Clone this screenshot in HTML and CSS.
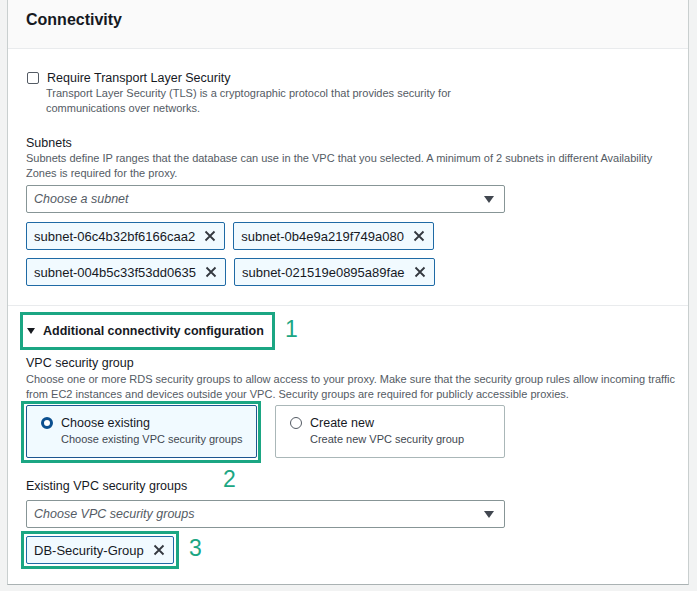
FILE: index.html
```html
<!DOCTYPE html>
<html lang="en">
<head>
<meta charset="utf-8">
<title>Connectivity</title>
<link rel="stylesheet" href="styles.css">
</head>
<body>
<div class="card">
  <div class="card-header"><h2 class="title">Connectivity</h2></div>

  <div class="section">
    <div class="checkbox-field">
      <div class="checkbox-row">
        <span class="checkbox"></span>
        <span class="label">Require Transport Layer Security</span>
      </div>
      <p class="desc indent">Transport Layer Security (TLS) is a cryptographic protocol that provides security for<br>communications over networks.</p>
    </div>

    <div class="field">
      <div class="label">Subnets</div>
      <p class="desc">Subnets define IP ranges that the database can use in the VPC that you selected. A minimum of 2 subnets in different Availability<br>Zones is required for the proxy.</p>
      <div class="select">
        <span class="placeholder">Choose a subnet</span>
        <svg class="caret" width="10" height="7" viewBox="0 0 10 7"><polygon points="0,0 10,0 5,7" fill="#414750"/></svg>
      </div>
      <div class="tokens">
        <span class="token">subnet-06c4b32bf6166caa2<svg class="x" width="12" height="12" viewBox="0 0 12 12"><path d="M1.5 1.5 L10.5 10.5 M10.5 1.5 L1.5 10.5" stroke="#33383f" stroke-width="1.8" fill="none"/></svg></span>
        <span class="token">subnet-0b4e9a219f749a080<svg class="x" width="12" height="12" viewBox="0 0 12 12"><path d="M1.5 1.5 L10.5 10.5 M10.5 1.5 L1.5 10.5" stroke="#33383f" stroke-width="1.8" fill="none"/></svg></span>
        <span class="token">subnet-004b5c33f53dd0635<svg class="x" width="12" height="12" viewBox="0 0 12 12"><path d="M1.5 1.5 L10.5 10.5 M10.5 1.5 L1.5 10.5" stroke="#33383f" stroke-width="1.8" fill="none"/></svg></span>
        <span class="token">subnet-021519e0895a89fae<svg class="x" width="12" height="12" viewBox="0 0 12 12"><path d="M1.5 1.5 L10.5 10.5 M10.5 1.5 L1.5 10.5" stroke="#33383f" stroke-width="1.8" fill="none"/></svg></span>
      </div>
    </div>
  </div>

  <div class="section section-b">
    <div class="expander annot-1">
      <svg class="exp-caret" width="8" height="6" viewBox="0 0 8 6"><polygon points="0,0 8,0 4,6" fill="#16191f"/></svg>
      <span class="exp-label">Additional connectivity configuration</span>
      <span class="num num-1">1</span>
    </div>

    <div class="field field-vpc">
      <div class="label">VPC security group</div>
      <p class="desc">Choose one or more RDS security groups to allow access to your proxy. Make sure that the security group rules allow incoming traffic<br>from EC2 instances and devices outside your VPC. Security groups are required for publicly accessible proxies.</p>
      <div class="tiles">
        <div class="tile tile-selected annot-2">
          <span class="radio radio-on"></span>
          <div class="tile-text">
            <div class="tile-title">Choose existing</div>
            <div class="tile-sub">Choose existing VPC security groups</div>
          </div>
          <span class="num num-2">2</span>
        </div>
        <div class="tile">
          <span class="radio"></span>
          <div class="tile-text">
            <div class="tile-title">Create new</div>
            <div class="tile-sub">Create new VPC security group</div>
          </div>
        </div>
      </div>
    </div>

    <div class="field field-existing">
      <div class="label">Existing VPC security groups</div>
      <div class="select select-tight">
        <span class="placeholder">Choose VPC security groups</span>
        <svg class="caret" width="10" height="7" viewBox="0 0 10 7"><polygon points="0,0 10,0 5,7" fill="#414750"/></svg>
      </div>
      <div class="tokens">
        <span class="token annot-3">DB-Security-Group<svg class="x" width="12" height="12" viewBox="0 0 12 12"><path d="M1.5 1.5 L10.5 10.5 M10.5 1.5 L1.5 10.5" stroke="#33383f" stroke-width="1.8" fill="none"/></svg><span class="num num-3">3</span></span>
      </div>
    </div>
  </div>
</div>
</body>
</html>
```

FILE: styles.css
```css
* { box-sizing: border-box; }

html, body {
  margin: 0;
  overflow: hidden;
}

body {
  background: #f2f3f3;
  padding: 0 8px 8px 7px;
  font-family: "Liberation Sans", Arial, sans-serif;
  color: #16191f;
}

.card {
  background: #ffffff;
  border: 1px solid #c9cfcf;
  border-top: none;
  border-bottom-color: #aab2b3;
}

.card-header {
  background: #fafafa;
  padding: 10px 18px 18px;
  border-bottom: 1px solid #e9ebed;
}

.title {
  margin: 0;
  font-size: 16px;
  line-height: 20px;
  font-weight: 700;
  color: #16191f;
}

.section {
  padding: 20px 18px 19px;
}

.section-b {
  border-top: 1px solid #e9ebed;
  padding-top: 17px;
  padding-bottom: 20px;
}

.label {
  font-size: 12.5px;
  line-height: 16px;
  color: #16191f;
}

.desc {
  margin: 0;
  font-size: 11px;
  line-height: 14.5px;
  color: #545b64;
  white-space: nowrap;
}

.checkbox-row {
  display: flex;
  align-items: center;
  gap: 8px;
  padding-left: 1px;
  padding-top: 1px;
}

.checkbox {
  width: 12px;
  height: 12px;
  border: 1.5px solid #545b64;
  border-radius: 2px;
  background: #fff;
  flex: none;
}

.indent {
  margin-top: 0;
  padding-left: 20px;
}

.field {
  margin-top: 20px;
  width: 480px;
}

.field-vpc {
  margin-top: 16px;
}

.field-vpc .desc {
  margin-top: 1px;
}

.select {
  margin-top: 5px;
  height: 28px;
  border: 1px solid #879596;
  border-radius: 2px;
  display: flex;
  align-items: center;
  justify-content: space-between;
  padding: 0 10px 0 7px;
  width: 479px;
}

.select-tight {
  margin-top: 6px;
}

.placeholder {
  font-style: italic;
  font-size: 12.5px;
  color: #545b64;
}

.caret {
  display: block;
}

.tokens {
  margin-top: 9px;
  display: flex;
  flex-wrap: wrap;
  gap: 8px;
}

.field-existing .tokens {
  margin-top: 8px;
}

.token {
  display: inline-flex;
  align-items: center;
  gap: 9px;
  height: 28px;
  padding: 0 8px 0 7px;
  background: #f1faff;
  border: 1px solid #1f6aa5;
  border-radius: 2px;
  font-size: 13px;
  color: #16191f;
}

.x {
  display: block;
  flex: none;
}

.expander {
  display: flex;
  width: max-content;
  align-items: center;
  gap: 8px;
  padding-left: 1px;
  font-size: 12.5px;
  line-height: 16px;
  font-weight: 700;
  color: #16191f;
}

.exp-caret {
  display: block;
}

.tiles {
  margin-top: 4px;
  display: grid;
  grid-template-columns: 231px 230px;
  gap: 18px;
}

.tile {
  display: flex;
  align-items: flex-start;
  gap: 8px;
  height: 53px;
  padding: 9px 14px 10px;
  border: 1px solid #aab7b8;
  border-radius: 2px;
  background: #fff;
}

.tile-selected {
  background: #f1faff;
  border-color: #1d5690;
}

.radio {
  width: 12px;
  height: 12px;
  margin-top: 2px;
  border: 1.5px solid #545b64;
  border-radius: 50%;
  background: #fff;
  flex: none;
}

.radio-on {
  border: 3.5px solid #0b4f8f;
  background: #fff;
}

.tile-title {
  font-size: 12.5px;
  line-height: 16px;
  color: #16191f;
  white-space: nowrap;
}

.tile-sub {
  margin-top: 1px;
  font-size: 11px;
  line-height: 15px;
  color: #414750;
  white-space: nowrap;
}

/* annotation overlays */
.annot-1, .annot-2, .annot-3 {
  position: relative;
}

.annot-1::after, .annot-2::after, .annot-3::after {
  content: "";
  position: absolute;
  border: 3px solid #1ba683;
  pointer-events: none;
}

.annot-1::after {
  top: -11px;
  bottom: -11px;
  left: -6px;
  right: -11px;
}

.annot-2::after {
  top: -5px;
  bottom: -6px;
  left: -6px;
  right: -5px;
}

.annot-3::after {
  top: -6px;
  bottom: -6px;
  left: -6px;
  right: -6px;
}

.num {
  position: absolute;
  font-family: "Liberation Sans", Arial, sans-serif;
  font-size: 23px;
  line-height: 23px;
  font-weight: 400;
  color: #1ba683;
}

.num-1 {
  left: 259px;
  top: -5px;
}

.num-2 {
  left: 196px;
  top: 62px;
}

.num-3 {
  left: 162px;
  top: 0px;
}
```
